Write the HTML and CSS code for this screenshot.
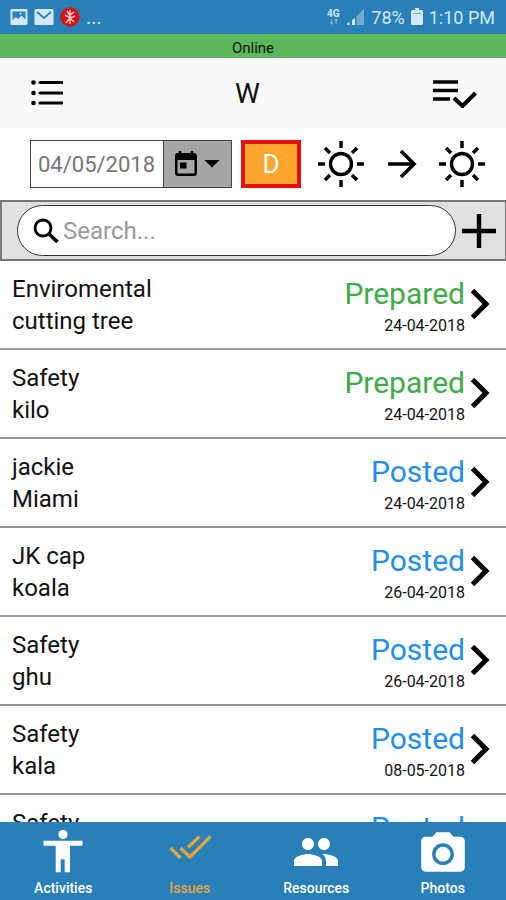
FILE: index.html
```html
<!DOCTYPE html>
<html lang="en">
<head>
<meta charset="utf-8">
<meta name="viewport" content="width=device-width, initial-scale=1">
<title>Issues</title>
<link rel="stylesheet" href="styles.css">
</head>
<body>
<div class="status">
  <div class="status-group status-left">
    <svg width="18" height="18" viewBox="0 0 18 18"><rect x="0.5" y="1" width="17" height="16" rx="1.5" fill="#d3e9f7"/><path d="M2.500 3.500h13v8l-4-4-3.500 3.500-2-2-3.500 3z" fill="#2980b9"/><circle cx="10.500" cy="5.500" r="1" fill="#d3e9f7"/></svg>
    <svg width="20" height="18" viewBox="0 0 20 18"><rect x="0.500" y="1" width="19" height="16" rx="1.500" fill="#d3e9f7"/><path d="M3 4l7 6 7-6" fill="none" stroke="#2980b9" stroke-width="1.800"/></svg>
    <svg width="20" height="20" viewBox="0 0 20 20"><circle cx="10" cy="10" r="9.700" fill="#dc1014"/><path d="M10 3v14M10 9L7 4M10 8l4-3M5 8l5 3 5-2M10 11l-4 5M10 11l4 4" stroke="#f6c9c5" stroke-width="1.500" fill="none"/></svg>
    <span class="dots">...</span>
  </div>
  <div class="status-group status-right">
    <svg width="14" height="18" viewBox="0 0 14 18"><text x="0" y="9" class="net">4G</text><path d="M4.500 11v5M3 14l1.500 2 1.500-2M9 16v-5M7.500 13L9 11l1.500 2" fill="none" stroke="#7fb3d8" stroke-width="1.200"/></svg>
    <svg width="18" height="18" viewBox="0 0 18 18"><path d="M0 17v-1.500L2.500 14v3zM5 17v-5l3-2v7z" fill="#d3e9f7"/><path d="M9.500 17V8l3-2v11zM12.500 17V5L17 1v16z" fill="#75abd2"/></svg>
    <span>78%</span>
    <svg width="12" height="18" viewBox="0 0 12 18"><path d="M4 0h4v2h2.500q1.500 0 1.500 1.500v12q0 1.500-1.500 1.500h-9Q0 17 0 15.500v-12Q0 2 1.500 2H4z" fill="#d3e9f7"/><path d="M2 5.500h8" stroke="#6da8d1" stroke-width="1"/></svg>
    <span>1:10 PM</span>
  </div>
</div>
<div class="online">Online</div>
<header class="toolbar">
  <button class="icon-btn" aria-label="Menu"><svg width="32" height="28" viewBox="0 0 32 28"><g fill="#000"><circle cx="2.500" cy="3.500" r="2.300"/><circle cx="2.500" cy="14" r="2.300"/><circle cx="2.500" cy="24" r="2.300"/></g><path d="M9 3.500h22M9 14h22M9 24h22" stroke="#000" stroke-width="3.200" stroke-linecap="round"/></svg></button>
  <h1>W</h1>
  <button class="icon-btn" aria-label="Select items"><svg width="46" height="30" viewBox="0 0 46 30"><path d="M1 4h25M1 12.500h25M1 21h17" stroke="#000" stroke-width="3.600" fill="none"/><path d="M22 20l8.500 8L43.500 15" stroke="#000" stroke-width="4" fill="none"/></svg></button>
</header>
<main>
  <div class="filters">
    <div class="date-box">
      <input type="text" value="04/05/2018" aria-label="Date">
      <button class="date-btn" aria-label="Choose date">
        <svg width="22" height="26" viewBox="0 0 22 26"><path d="M0 5q0-3 3-3h16q3 0 3 3v17q0 3-3 3H3q-3 0-3-3zM2.500 9v12.500q0 1 1 1h15q1 0 1-1V9z" fill="#000" fill-rule="evenodd"/><path d="M5 0v4M17 0v4" stroke="#000" stroke-width="2.600"/><rect x="5" y="11.500" width="6.500" height="6" fill="#000"/></svg>
        <svg width="16" height="8" viewBox="0 0 16 8"><path d="M0.500 0h15L8 7.500z" fill="#000"/></svg>
      </button>
    </div>
    <button class="day">D</button>
    <div class="range">
      <button class="icon-btn" aria-label="From day"><svg width="48" height="48" viewBox="0 0 48 48"><use href="#sun"/></svg></button>
      <svg width="30" height="30" viewBox="0 0 30 30"><path d="M1 15h26M14 2l13 13-13 13" fill="none" stroke="#000" stroke-width="3.600"/></svg>
      <button class="icon-btn" aria-label="To day"><svg width="48" height="48" viewBox="0 0 48 48"><g id="sun" fill="none" stroke="#000" stroke-width="3.400"><circle cx="24" cy="24" r="10.500"/><path d="M24 1v7M24 40v7M1 24h7M40 24h7M8 8l5 5M35 35l5 5M40 8l-5 5M13 35l-5 5"/></g></svg></button>
    </div>
  </div>
  <div class="search-bar">
    <label class="pill">
      <svg width="26" height="26" viewBox="0 0 26 26"><circle cx="10" cy="10" r="8" fill="none" stroke="#000" stroke-width="2.800"/><path d="M16 16l8.500 8" stroke="#000" stroke-width="3.600"/></svg>
      <input type="search" placeholder="Search..." aria-label="Search">
    </label>
    <button class="icon-btn" aria-label="Add issue"><svg width="34" height="34" viewBox="0 0 34 34"><path d="M0 17h34M17 0v34" stroke="#000" stroke-width="4.400"/></svg></button>
  </div>
  <ul class="list">
    <li><a href="#"><span class="name">Enviromental<br>cutting tree</span><span class="state prepared">Prepared<small>24-04-2018</small></span><svg class="chev" viewBox="0 0 20 32"><use href="#chev"/></svg></a></li>
    <li><a href="#"><span class="name">Safety<br>kilo</span><span class="state prepared">Prepared<small>24-04-2018</small></span><svg class="chev" viewBox="0 0 20 32"><use href="#chev"/></svg></a></li>
    <li><a href="#"><span class="name">jackie<br>Miami</span><span class="state posted">Posted<small>24-04-2018</small></span><svg class="chev" viewBox="0 0 20 32"><use href="#chev"/></svg></a></li>
    <li><a href="#"><span class="name">JK cap<br>koala</span><span class="state posted">Posted<small>26-04-2018</small></span><svg class="chev" viewBox="0 0 20 32"><use href="#chev"/></svg></a></li>
    <li><a href="#"><span class="name">Safety<br>ghu</span><span class="state posted">Posted<small>26-04-2018</small></span><svg class="chev" viewBox="0 0 20 32"><use href="#chev"/></svg></a></li>
    <li><a href="#"><span class="name">Safety<br>kala</span><span class="state posted">Posted<small>08-05-2018</small></span><svg class="chev" viewBox="0 0 20 32"><path id="chev" d="M2.500 2.500L16 16 2.500 29.500" fill="none" stroke="#000" stroke-width="5"/></svg></a></li>
    <li><a href="#"><span class="name">Safety</span><span class="state posted">Posted</span><svg class="chev" viewBox="0 0 20 32"><use href="#chev"/></svg></a></li>
  </ul>
</main>
<nav class="tabs">
  <a href="#"><svg viewBox="0 0 48 48" fill="currentColor"><circle cx="24" cy="6.500" r="4.600"/><path d="M4.500 12.700h39v5H31v26.600h-5.300v-13h-4v13h-5V17.700H4.500z"/></svg>Activities</a>
  <a href="#" class="active"><svg viewBox="0 0 48 48" fill="none" stroke="currentColor" stroke-width="3.200"><path d="M4.500 20l10 10M14.500 20l9.500 9L44.500 8.500M22 19.500L33.500 8.500"/></svg>Issues</a>
  <a href="#"><svg viewBox="0 0 24 24" fill="currentColor"><path d="M16 11c1.660 0 2.990-1.340 2.990-3S17.660 5 16 5c-1.660 0-3 1.340-3 3s1.340 3 3 3zm-8 0c1.660 0 2.990-1.340 2.990-3S9.660 5 8 5C6.340 5 5 6.340 5 8s1.340 3 3 3zm0 2c-2.330 0-7 1.170-7 3.500V19h14v-2.500c0-2.330-4.670-3.500-7-3.500zm8 0c-.29 0-.62.02-.97.05 1.160.84 1.970 1.970 1.970 3.450V19h6v-2.500c0-2.330-4.670-3.500-7-3.500z"/></svg>Resources</a>
  <a href="#"><svg viewBox="1 0 22 22" fill="currentColor"><path d="M9 2L7.170 4H4c-1.100 0-2 .9-2 2v12c0 1.100.9 2 2 2h16c1.100 0 2-.9 2-2V6c0-1.100-.9-2-2-2h-3.170L15 2H9zm3 15c-2.760 0-5-2.240-5-5s2.240-5 5-5 5 2.240 5 5-2.240 5-5 5z"/><circle cx="12" cy="12" r="3.400"/></svg>Photos</a>
</nav>
</body>
</html>
```
FILE: styles.css
```css
* { box-sizing: border-box; }
body {
  margin: 0;
  height: 100vh;
  display: flex;
  flex-direction: column;
  font-family: Roboto, "Liberation Sans", sans-serif;
  color: #111;
  background: #fff;
}
svg { display: block; flex: none; }
button, input { font: inherit; border: 0; padding: 0; margin: 0; background: none; color: inherit; outline: 0; }
a { color: inherit; text-decoration: none; }

.status {
  flex: none;
  height: 34px;
  padding: 0 11px 0 10px;
  display: flex;
  justify-content: space-between;
  align-items: center;
  background: #2980b9;
  color: #d3e9f7;
  font-size: 18px;
}
.status-group { display: flex; align-items: center; }
.status-left { gap: 6px; }
.status-right { gap: 6px; }
.dots { font-size: 20px; }
.net { font: bold 10px Roboto, sans-serif; fill: #d3e9f7; }

.online {
  flex: none;
  height: 24px;
  background: #5cb85c;
  text-align: center;
  font-size: 15px;
  line-height: 28px;
}
.toolbar {
  flex: none;
  height: 70px;
  padding: 0 28px 0 31px;
  display: flex;
  justify-content: space-between;
  align-items: center;
  background: #fafafa;
}
.toolbar h1 { margin: 0; font-size: 28px; font-weight: 400; }

main { flex: 1; min-height: 0; display: flex; flex-direction: column; overflow: hidden; }
.filters {
  flex: none;
  height: 72px;
  padding: 0 20px 0 30px;
  display: flex;
  align-items: center;
  gap: 9px;
}
.date-box { display: flex; flex: none; width: 202px; height: 48px; border: 1px solid #444; }
.date-box input { flex: 1; min-width: 0; padding-left: 7px; font-size: 22px; color: #757575; }
.date-btn {
  width: 68px;
  display: flex;
  align-items: center;
  justify-content: center;
  gap: 7px;
  background: #a6a6a6;
  border-left: 1px solid #444;
}
.day { flex: none; width: 60px; height: 48px; border: 4px solid #e60f0f; background: #ffa62f; color: #fff; font-size: 26px; }
.range { flex: 1; display: flex; justify-content: space-between; align-items: center; padding-left: 7px; }

.search-bar {
  flex: none;
  height: 61px;
  padding: 0 9px 0 15px;
  display: flex;
  align-items: center;
  gap: 6px;
  background: #e0e0e0;
  border: 2px solid #777;
  border-right-width: 1px;
}
.pill {
  flex: 1;
  height: 51px;
  padding-left: 15px;
  display: flex;
  align-items: center;
  gap: 4px;
  background: #fff;
  border: 1px solid #333;
  border-radius: 26px;
}
.pill input { flex: 1; min-width: 0; font-size: 24px; }
.pill input::placeholder { color: #999; opacity: 1; }

.list { margin: 0; padding: 0; list-style: none; }
.list a {
  height: 89px;
  padding: 12px 16px 0 12px;
  display: flex;
  align-items: flex-start;
  border-bottom: 2px solid #999;
}
.name { flex: 1; font-size: 24px; line-height: 32px; }
.state { text-align: right; font-size: 30px; line-height: 42px; }
.state small { display: block; font-size: 16px; line-height: 22px; color: #111; }
.prepared { color: #3cab48; }
.posted { color: #1f8eec; }
.chev { width: 20px; height: 32px; margin: 15px 0 0 5px; }

.tabs {
  flex: none;
  height: 78px;
  padding-top: 6px;
  display: grid;
  grid-template-columns: repeat(4, 1fr);
  background: #2980b9;
  color: #fff;
}
.tabs a { display: flex; flex-direction: column; align-items: center; font-size: 14px; line-height: 24px; font-weight: 500; }
.tabs svg { width: 48px; height: 48px; }
.tabs .active { color: #e5a63c; }
```
